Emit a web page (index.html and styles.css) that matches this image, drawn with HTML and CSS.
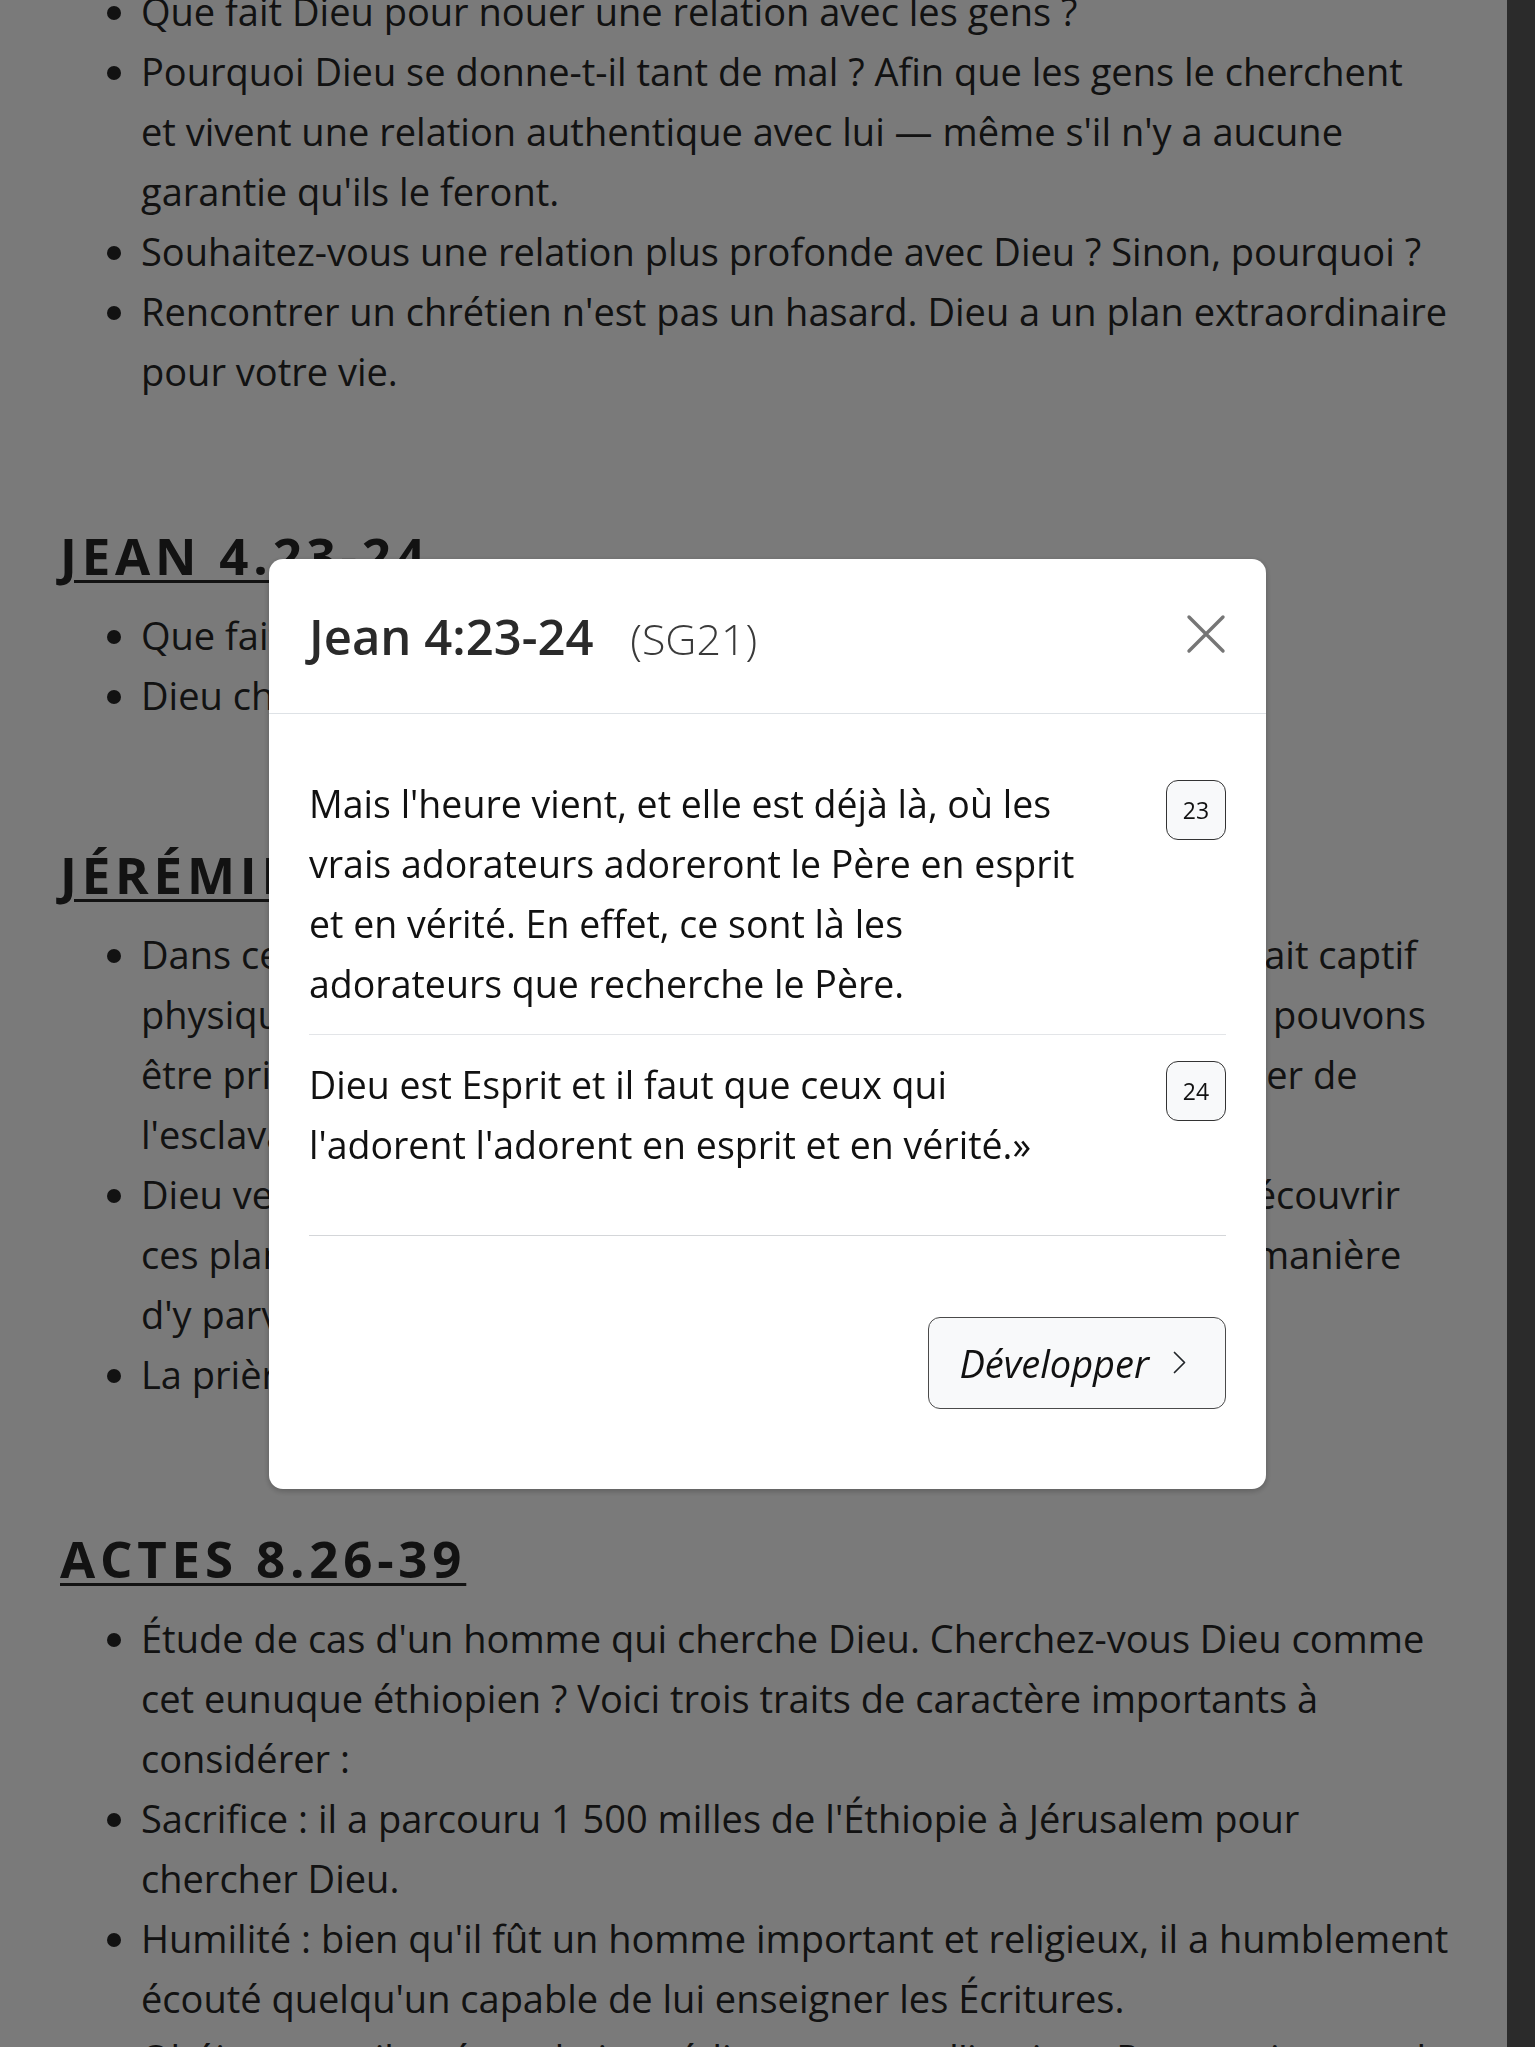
FILE: index.html
```
<!DOCTYPE html>
<html lang="fr">
<head>
<meta charset="utf-8">
<title>Jean 4:23-24</title>
<link rel="stylesheet" href="styles.css">
</head>
<body>
<main class="page">
  <ul class="points">
    <li>Que fait Dieu pour nouer une relation avec les gens ?</li>
    <li>Pourquoi Dieu se donne-t-il tant de mal ? Afin que les gens le cherchent et&nbsp;vivent une relation authentique avec lui — même s'il n'y a aucune garantie qu'ils le feront.</li>
    <li>Souhaitez-vous une relation plus profonde avec Dieu ? Sinon, pourquoi ?</li>
    <li>Rencontrer un chrétien n'est pas un hasard. Dieu a un plan extraordinaire pour votre vie.</li>
  </ul>

  <h2 class="ref-title">Jean 4.23-24</h2>
  <ul class="points">
    <li>Que fait le Père pour trouver des adorateurs ?</li>
    <li>Dieu cherche de vrais adorateurs.</li>
  </ul>

  <h2 class="ref-title ref-title--close">Jérémie 29.11-13</h2>
  <ul class="points">
    <li>Dans ce passage de Jérémie, le peuple d'Israël envoyé au loin était captif physiquement, à Babylone. Aujourd'hui, comme eux jadis, nous pouvons être prisonniers du péché, mais le Dieu d'amour veut nous libérer de l'esclavage du péché.</li>
    <li>Dieu veut que nous connaissions ses projets pour nous. Pour découvrir ces plans, il faut Le chercher de tout notre cœur : voilà la seule manière d'y&nbsp;parvenir est de le prier.</li>
    <li>La prière est la clé.</li>
  </ul>

  <h2 class="ref-title">Actes 8.26-39</h2>
  <ul class="points">
    <li>Étude de cas d'un homme qui cherche Dieu. Cherchez-vous Dieu comme cet eunuque éthiopien ? Voici trois traits de caractère importants à considérer :</li>
    <li>Sacrifice : il a parcouru 1 500 milles de l'Éthiopie à Jérusalem pour chercher Dieu.</li>
    <li>Humilité : bien qu'il fût un homme important et religieux, il a humblement écouté quelqu'un capable de lui enseigner les Écritures.</li>
    <li>Obéissance : il a répondu immédiatement et d'instinct. Pourquoi ne pas le faire aussi ?</li>
  </ul>
</main>

<div class="scrollbar"></div>
<div class="backdrop"></div>

<div class="modal-wrap">
  <section class="modal" role="dialog" aria-labelledby="modal-title">
    <header class="modal-header">
      <h3 class="modal-title" id="modal-title">Jean 4:23-24 <span class="version">(SG21)</span></h3>
      <button class="close" type="button" aria-label="Fermer">
        <svg width="40" height="40" viewBox="0 0 40 40" aria-hidden="true"><path d="M3 3 L37 37 M37 3 L3 37" stroke="#767676" stroke-width="3.4" stroke-linecap="round" fill="none"/></svg>
      </button>
    </header>
    <div class="modal-body">
      <div class="verse">
        <p class="verse-text">Mais l'heure vient, et elle est déjà là, où les vrais adorateurs adoreront le Père en esprit et en vérité. En effet, ce sont là les adorateurs que recherche le Père.</p>
        <span class="verse-num">23</span>
      </div>
      <div class="verse">
        <p class="verse-text">Dieu est Esprit et il faut que ceux qui l'adorent l'adorent en esprit et en vérité.»</p>
        <span class="verse-num">24</span>
      </div>
    </div>
    <footer class="modal-footer">
      <button class="expand" type="button">Développer
        <svg width="13" height="23" viewBox="0 0 13 23" aria-hidden="true"><polyline points="1.5,1.5 11.5,11.5 1.5,21.5" stroke="#212529" stroke-width="1.7" fill="none" stroke-linecap="round" stroke-linejoin="round"/></svg>
      </button>
    </footer>
  </section>
</div>
</body>
</html>
```
FILE: styles.css
```
html, body {
  margin: 0;
  padding: 0;
}

body {
  background: #ffffff;
  color: #272727;
  font-family: "Open Sans", "Noto Sans", "DejaVu Sans", sans-serif;
  overflow: hidden;
  height: 2047px;
}

.page {
  width: 1390px;
  padding-left: 60px;
  margin-top: -19px;
}

.points {
  margin: 0;
  padding-left: 81px;
  font-size: 38px;
  line-height: 60px;
}

.ref-title {
  margin: 124px 0 20px;
  font-size: 51px;
  line-height: 60px;
  font-weight: 700;
  letter-spacing: 4.8px;
  text-transform: uppercase;
  text-decoration: underline;
  text-decoration-thickness: 3px;
  text-underline-offset: 5px;
  color: #272727;
}

.ref-title--close {
  margin-top: 119px;
}

.scrollbar {
  position: fixed;
  top: 0;
  right: 0;
  bottom: 0;
  width: 28px;
  background: #2b2b2b;
  z-index: 3;
}

.backdrop {
  position: fixed;
  inset: 0;
  background: rgba(0, 0, 0, 0.52);
  z-index: 1;
}

.modal-wrap {
  position: fixed;
  inset: 0;
  display: flex;
  align-items: center;
  justify-content: center;
  z-index: 2;
}

.modal {
  width: 997px;
  background: #ffffff;
  border-radius: 14px;
  box-shadow: 0 2px 6px rgba(0, 0, 0, 0.25);
  color: #212529;
}

.modal-header {
  display: flex;
  align-items: center;
  justify-content: space-between;
  height: 155px;
  box-sizing: border-box;
  padding: 4px 40px 0;
  border-bottom: 1px solid #dee2e6;
}

.modal-title {
  margin: 0;
  font-size: 49px;
  line-height: 60px;
  font-weight: 600;
  color: #2a2a2a;
}

.version {
  margin-left: 24px;
  font-size: 43px;
  font-weight: 300;
  color: #3a3a3a;
}

.close {
  display: flex;
  margin-top: -8px;
  padding: 0;
  border: 0;
  background: transparent;
  width: 40px;
  height: 40px;
}

.modal-body {
  padding: 40px 40px 0;
}

.verse {
  display: grid;
  grid-template-columns: 1fr 60px;
  column-gap: 77px;
  align-items: start;
  padding: 20px 0;
  border-bottom: 1.5px solid #e3e5e8;
}

.verse:last-child {
  padding-bottom: 60px;
  border-bottom-color: #d4d6d9;
}

.verse-text {
  margin: 0;
  font-size: 37.5px;
  line-height: 60px;
  color: #111111;
}

.verse-num {
  box-sizing: border-box;
  width: 60px;
  height: 60px;
  margin-top: 6px;
  display: flex;
  align-items: center;
  justify-content: center;
  border: 1.5px solid #333333;
  border-radius: 12px;
  background: #f8f9fa;
  font-size: 23px;
  color: #111111;
}

.modal-footer {
  display: flex;
  justify-content: flex-end;
  padding: 81px 40px 80px;
}

.expand {
  display: flex;
  align-items: center;
  gap: 24px;
  height: 92px;
  box-sizing: border-box;
  padding: 0 39px 0 30px;
  border: 1.5px solid #4a4a4a;
  border-radius: 12px;
  background: #f8f9fa;
  font-family: "Open Sans", "Noto Sans", sans-serif;
  font-size: 38px;
  font-style: italic;
  color: #111111;
}
```
